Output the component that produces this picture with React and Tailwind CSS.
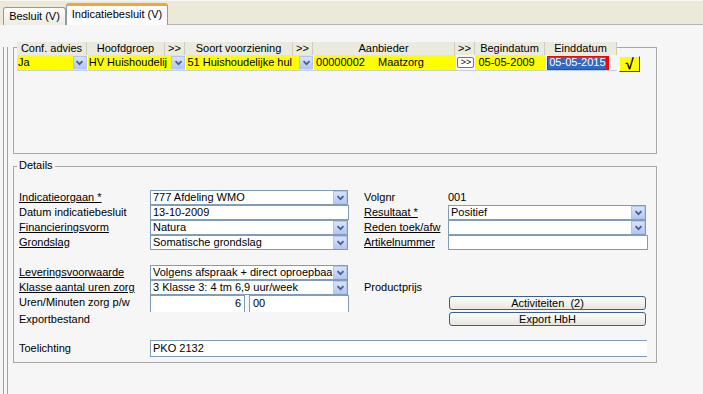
import React from "react";

const Chev = ({ cls = "" }) => (
  <div className={"flex items-center justify-center w-[14px] h-[13px] bg-gradient-to-b from-[#d7e2fd] to-[#b4c8f6] border border-[#b3c5ee] " + cls}>
    <svg width="9" height="6" viewBox="0 0 9 6">
      <path d="M1.5 1.2 L4.5 4.2 L7.5 1.2" fill="none" stroke="#4d6185" strokeWidth="1.8" />
    </svg>
  </div>
);

const Combo = ({ text, w = "w-[198px]" }) => (
  <div className={"flex items-center h-[15px] bg-white border border-[#7f9db9] " + w}>
    <div className="flex-1 pl-[2px] whitespace-nowrap overflow-hidden">{text}</div>
    <Chev />
  </div>
);

const TextField = ({ text, w = "w-[198px]" }) => (
  <div className={"flex items-center h-[15px] bg-white border border-[#7f9db9] pl-[2px] " + w}>{text}</div>
);

const Label = ({ children, u }) => (
  <div className={"w-[131px] shrink-0 whitespace-nowrap " + (u ? "underline" : "")}>{children}</div>
);
const RLabel = ({ children, u }) => (
  <div className={"w-[84px] shrink-0 whitespace-nowrap " + (u ? "underline" : "")}>{children}</div>
);

export default function App() {
  const head = [
    ["w-[70px]", "Conf. advies"],
    ["w-[78px]", "Hoofdgroep"],
    ["w-[20px]", ">>"],
    ["w-[108px]", "Soort voorziening"],
    ["w-[20px]", ">>"],
    ["w-[142px]", "Aanbieder"],
    ["w-[20px]", ">>"],
    ["w-[70px]", "Begindatum"],
    ["w-[72px]", "Einddatum"],
  ];
  return (
    <div
      className="w-[703px] h-[394px] bg-[#f6f6f6] overflow-hidden text-[11px] leading-[13px] text-black"
      style={{ fontFamily: '"Liberation Sans", Arial, sans-serif' }}
    >
      {/* tab strip */}
      <div className="h-[25px] bg-[#ece9d8] border-t border-[#f8f7f2] flex items-end pl-[3px]">
        <div className="h-[18px] w-[63px] border border-b-0 border-[#919b9c] rounded-t-[3px] bg-gradient-to-b from-[#fefefe] to-[#ecebe6] flex items-center justify-center">
          Besluit (V)
        </div>
        <div className="h-[22px] w-[102px] border-x border-[#919b9c] border-t-[3px] border-t-[#f3a53b] rounded-t-[3px] bg-[#fcfcfe] flex items-center justify-center pb-[2px]">
          Indicatiebesluit (V)
        </div>
        <div className="flex-1 h-[1px] bg-[#b5b5ad]" />
      </div>

      {/* body with left frame */}
      <div className="h-[369px] ml-[3px] border-l border-[#9f9f9f]">
        <div className="h-full ml-[3px] border-l border-[#9f9f9f] pl-[5px]">
          {/* upper grid box */}
          <div className="mt-[22px] w-[644px] h-[107px] border border-[#a8a8a8]">
            <div className="-mt-[6px] ml-[3px]">
              <div className="flex h-[13px] w-[600px] bg-[#ebeadf]">
                {head.map(([w, t], i) => (
                  <div
                    key={i}
                    className={w + " shrink-0 text-center border-r border-[#cfccbd] whitespace-nowrap"}
                  >
                    {t}
                  </div>
                ))}
              </div>
              <div className="flex items-start">
                <div className="flex h-[16px] items-stretch border-b border-[#c3d0e3] w-[600px]">
                  <div className="w-[70px] flex bg-[#ffff00] items-center">
                    <div className="flex-1 pl-[1px]">Ja</div>
                    <Chev />
                  </div>
                  <div className="w-[98px] ml-[1px] flex bg-[#ffff00] items-center">
                    <div className="flex-1 pl-[1px] whitespace-nowrap overflow-hidden">HV Huishoudelij</div>
                    <Chev />
                  </div>
                  <div className="w-[127px] ml-[1px] flex bg-[#ffff00] items-center">
                    <div className="flex-1 pl-[1px] whitespace-nowrap overflow-hidden">51 Huishoudelijke hul</div>
                    <Chev />
                  </div>
                  <div className="w-[142px] ml-[1px] flex bg-[#ffff00] items-center whitespace-nowrap">
                    <span className="pl-[2px] w-[64px]">00000002</span>
                    <span>Maatzorg</span>
                  </div>
                  <div className="w-[20px] flex items-center justify-end pr-[1px]">
                    <div className="w-[17px] h-[11px] border border-[#5a7aa8] rounded-[2px] bg-white text-[9px] leading-[9px] flex items-center justify-center">
                      &gt;&gt;
                    </div>
                  </div>
                  <div className="w-[70px] flex bg-[#ffff00] items-center pl-[3px]">05-05-2009</div>
                  <div className="w-[72px] flex items-center">
                    <div className="ml-[2px] h-[14px] w-[62px] border border-r-[3px] border-[#ff0000] bg-[#316ac5] text-white flex items-center pl-[1px] whitespace-nowrap overflow-hidden">
                      05-05-2015
                    </div>
                  </div>
                </div>
                <div className="ml-[2px] mt-[1px] w-[21px] h-[16px] bg-[#ffff00] border border-t-[#f4f4f4] border-l-[#f4f4f4] border-r-[#404040] border-b-[#404040] flex items-center justify-center font-bold text-[15px] leading-[14px]">
                  √
                </div>
              </div>
            </div>
          </div>

          {/* details box */}
          <div className="relative mt-[12px] w-[644px] h-[197px] border border-[#a8a8a8] pt-[23px] pl-[5px]">
            <div className="absolute left-[3px] -top-[8px] px-[2px] bg-[#f6f6f6]">Details</div>

            <div className="flex h-[15px] items-center">
              <Label u>Indicatieorgaan *</Label>
              <Combo text="777 Afdeling WMO" />
              <div className="w-[16px]" />
              <RLabel>Volgnr</RLabel>
              <div>001</div>
            </div>
            <div className="flex h-[15px] items-center">
              <Label>Datum indicatiebesluit</Label>
              <TextField text="13-10-2009" w="w-[199px]" />
              <div className="w-[15px]" />
              <RLabel u>Resultaat *</RLabel>
              <Combo text="Positief" />
            </div>
            <div className="flex h-[15px] items-center">
              <Label u>Financieringsvorm</Label>
              <Combo text="Natura" />
              <div className="w-[16px]" />
              <RLabel u>Reden toek/afw</RLabel>
              <Combo text="" />
            </div>
            <div className="flex h-[15px] items-center">
              <Label u>Grondslag</Label>
              <Combo text="Somatische grondslag" />
              <div className="w-[16px]" />
              <RLabel u>Artikelnummer</RLabel>
              <TextField text="" w="w-[200px]" />
            </div>

            <div className="flex h-[15px] items-center mt-[15px]">
              <Label u>Leveringsvoorwaarde</Label>
              <Combo text="Volgens afspraak + direct oproepbaa" />
            </div>
            <div className="flex h-[15px] items-center">
              <Label u>Klasse aantal uren zorg</Label>
              <Combo text="3 Klasse 3: 4 tm 6,9 uur/week" />
              <div className="w-[16px]" />
              <RLabel>Productprijs</RLabel>
            </div>
            <div className="flex h-[17px]">
              <div className="flex items-center h-[15px]">
                <Label>Uren/Minuten zorg p/w</Label>
              </div>
              <div className="w-[95px] h-[17px] border-l border-r border-t border-[#7f9db9] bg-white text-right pr-[3px] pt-[1px]">6</div>
              <div className="w-[4px]" />
              <div className="w-[100px] h-[17px] border-l border-r border-t border-[#7f9db9] bg-white pl-[3px] pt-[1px]">00</div>
              <div className="w-[16px]" />
              <div className="w-[84px]" />
              <button className="mt-[1px] w-[197px] h-[14px] border border-[#3c5f8c] rounded-[3px] bg-gradient-to-b from-[#fdfdfb] to-[#e8e6dc] text-[11px] leading-[12px] text-center">
                Activiteiten&nbsp;&nbsp;(2)
              </button>
            </div>
            <div className="flex h-[14px] items-center">
              <Label>Exportbestand</Label>
              <div className="w-[198px]" />
              <div className="w-[16px]" />
              <div className="w-[85px]" />
              <button className="w-[197px] h-[14px] border border-[#3c5f8c] rounded-[3px] bg-gradient-to-b from-[#fdfdfb] to-[#e8e6dc] text-[11px] leading-[12px] text-center">
                Export HbH
              </button>
            </div>
            <div className="flex h-[17px] items-center mt-[14px]">
              <Label>Toelichting</Label>
              <div className="w-[497px] h-[17px] border border-r-0 border-[#7f9db9] bg-white flex items-center pl-[2px]">PKO 2132</div>
            </div>
          </div>
        </div>
      </div>
    </div>
  );
}
